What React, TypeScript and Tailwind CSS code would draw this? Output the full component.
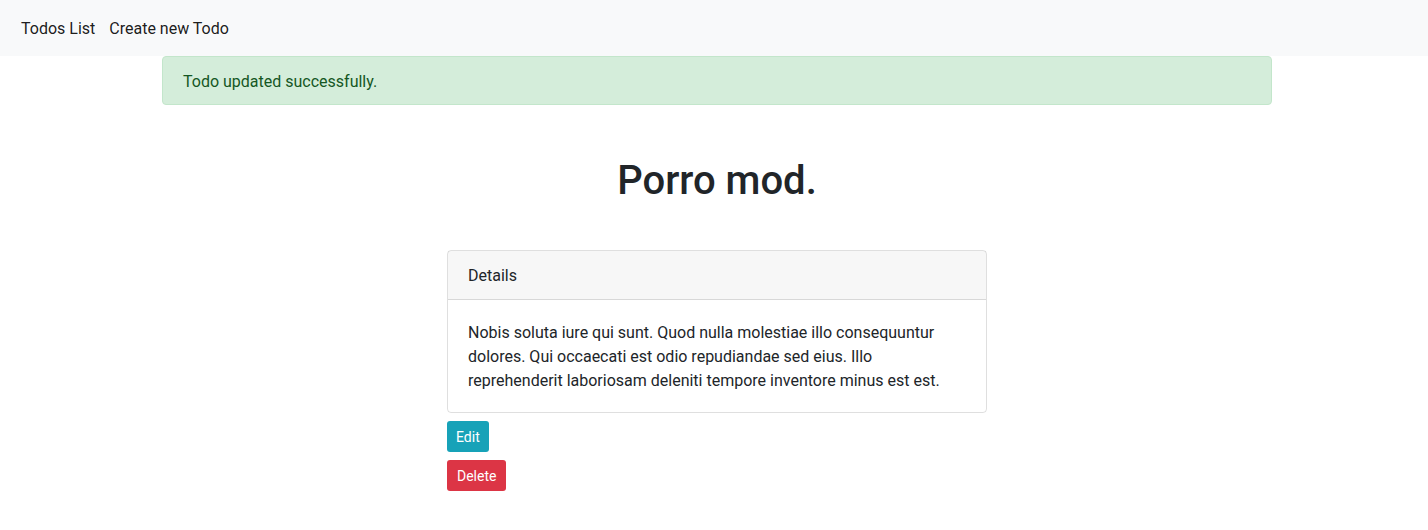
import React from 'react';

export default function App() {
  return (
    <div className="min-h-[530px] bg-white text-[#212529] font-['Segoe_UI',Roboto,'Liberation_Sans',sans-serif]">
      <nav className="h-14 bg-[#f8f9fa] flex items-center pl-[21px] pt-[2px] gap-[14px] text-base">
        <a className="text-black/90">Todos List</a>
        <a className="text-black/90">Create new Todo</a>
      </nav>

      <div className="ml-[162px] w-[1110px]">
        <div className="h-[49px] flex items-center px-5 pt-[2px] bg-[#d4edda] border border-[#c3e6cb] rounded text-[#155724] text-base">
          Todo updated successfully.
        </div>

        <h1 className="mt-[52px] text-center text-[40px] leading-[48px] font-medium">Porro mod.</h1>

        <div className="w-[540px] mx-auto mt-[45px]">
          <div className="border border-black/[0.125] rounded">
            <div className="h-[49px] flex items-center px-5 pt-[2px] bg-black/[0.03] border-b border-black/[0.125] text-base">
              Details
            </div>
            <div className="px-5 pt-[21px] pb-[19px] text-base leading-6">
              Nobis soluta iure qui sunt. Quod nulla molestiae illo consequuntur dolores. Qui occaecati est odio repudiandae sed eius. Illo reprehenderit laboriosam deleniti tempore inventore minus est est.
            </div>
          </div>

          <div className="mt-2 flex flex-col items-start gap-2">
            <button className="h-[31px] px-[9px] pt-px text-sm text-white bg-[#17a2b8] rounded-[3px]">Edit</button>
            <button className="h-[31px] px-[10px] pt-px text-sm text-white bg-[#dc3545] rounded-[3px]">Delete</button>
          </div>
        </div>
      </div>
    </div>
  );
}
